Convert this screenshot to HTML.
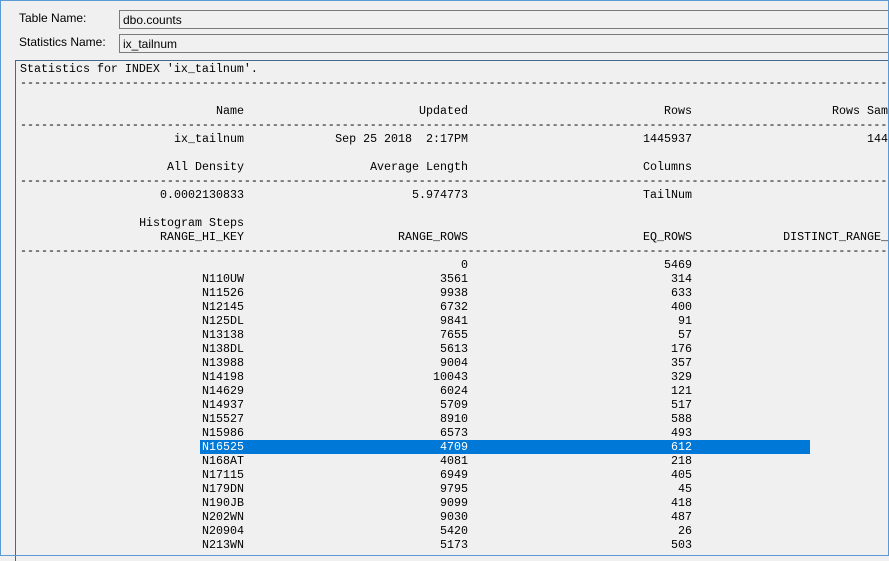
<!DOCTYPE html>
<html><head><meta charset="utf-8"><style>
html,body{margin:0;padding:0}
body{width:889px;height:556px;background:#f0f0f0;position:relative;overflow:hidden;font-family:"Liberation Sans",sans-serif}
.frame{position:absolute;left:0;top:0;width:887px;height:554px;border:1px solid #5b9bd5}
.lbl{position:absolute;left:19px;font-size:12px;color:#000}
.inp{position:absolute;left:119px;width:780px;height:19px;border:1px solid #7a7a7a;background:#f0f0f0;font-size:12px;line-height:19px;padding-left:3px;box-sizing:border-box}
.ta{position:absolute;left:15px;top:60px;width:880px;height:500px;border-left:1px solid #44698f;border-top:1px solid #44698f;overflow:hidden}
.ln{position:absolute;left:0;height:14px;width:1000px;font-family:"Liberation Mono",monospace;font-size:11.67px;line-height:14px;white-space:pre;color:#000}
.c{position:absolute;top:0;text-align:right}
.c1{left:0;width:228px}
.c2{left:228px;width:224px}
.c3{left:452px;width:224px}
.c4{left:676px;width:224px}
.l{position:absolute;left:4px;top:0}
.hl{position:absolute;left:184px;width:610px;height:14px;background:#0078d7}
.w{color:#fff}
</style></head><body>
<div class="frame"></div>
<div class="lbl" style="top:11px">Table Name:</div>
<div class="lbl" style="top:35px">Statistics Name:</div>
<div class="inp" style="top:10px">dbo.counts</div>
<div class="inp" style="top:34px">ix_tailnum</div>
<div class="ta">
<div class="hl" style="top:379px"></div>
<div class="ln" style="top:1px"><span class="l">Statistics for INDEX 'ix_tailnum'.</span></div>
<div class="ln" style="top:15px"><span class="l">------------------------------------------------------------------------------------------------------------------------------------------------</span></div>
<div class="ln" style="top:43px"><span class="c c1">Name</span><span class="c c2">Updated</span><span class="c c3">Rows</span><span class="c c4">Rows Sampled</span></div>
<div class="ln" style="top:57px"><span class="l">------------------------------------------------------------------------------------------------------------------------------------------------</span></div>
<div class="ln" style="top:71px"><span class="c c1">ix_tailnum</span><span class="c c2">Sep 25 2018  2:17PM</span><span class="c c3">1445937</span><span class="c c4">1445937</span></div>
<div class="ln" style="top:99px"><span class="c c1">All Density</span><span class="c c2">Average Length</span><span class="c c3">Columns</span></div>
<div class="ln" style="top:113px"><span class="l">------------------------------------------------------------------------------------------------------------------------------------------------</span></div>
<div class="ln" style="top:127px"><span class="c c1">0.0002130833</span><span class="c c2">5.974773</span><span class="c c3">TailNum</span></div>
<div class="ln" style="top:155px"><span class="c c1">Histogram Steps</span></div>
<div class="ln" style="top:169px"><span class="c c1">RANGE_HI_KEY</span><span class="c c2">RANGE_ROWS</span><span class="c c3">EQ_ROWS</span><span class="c c4">DISTINCT_RANGE_ROWS</span></div>
<div class="ln" style="top:183px"><span class="l">------------------------------------------------------------------------------------------------------------------------------------------------</span></div>
<div class="ln" style="top:197px"><span class="c c1"></span><span class="c c2">0</span><span class="c c3">5469</span></div>
<div class="ln" style="top:211px"><span class="c c1">N110UW</span><span class="c c2">3561</span><span class="c c3">314</span></div>
<div class="ln" style="top:225px"><span class="c c1">N11526</span><span class="c c2">9938</span><span class="c c3">633</span></div>
<div class="ln" style="top:239px"><span class="c c1">N12145</span><span class="c c2">6732</span><span class="c c3">400</span></div>
<div class="ln" style="top:253px"><span class="c c1">N125DL</span><span class="c c2">9841</span><span class="c c3">91</span></div>
<div class="ln" style="top:267px"><span class="c c1">N13138</span><span class="c c2">7655</span><span class="c c3">57</span></div>
<div class="ln" style="top:281px"><span class="c c1">N138DL</span><span class="c c2">5613</span><span class="c c3">176</span></div>
<div class="ln" style="top:295px"><span class="c c1">N13988</span><span class="c c2">9004</span><span class="c c3">357</span></div>
<div class="ln" style="top:309px"><span class="c c1">N14198</span><span class="c c2">10043</span><span class="c c3">329</span></div>
<div class="ln" style="top:323px"><span class="c c1">N14629</span><span class="c c2">6024</span><span class="c c3">121</span></div>
<div class="ln" style="top:337px"><span class="c c1">N14937</span><span class="c c2">5709</span><span class="c c3">517</span></div>
<div class="ln" style="top:351px"><span class="c c1">N15527</span><span class="c c2">8910</span><span class="c c3">588</span></div>
<div class="ln" style="top:365px"><span class="c c1">N15986</span><span class="c c2">6573</span><span class="c c3">493</span></div>
<div class="ln w" style="top:379px"><span class="c c1">N16525</span><span class="c c2">4709</span><span class="c c3">612</span></div>
<div class="ln" style="top:393px"><span class="c c1">N168AT</span><span class="c c2">4081</span><span class="c c3">218</span></div>
<div class="ln" style="top:407px"><span class="c c1">N17115</span><span class="c c2">6949</span><span class="c c3">405</span></div>
<div class="ln" style="top:421px"><span class="c c1">N179DN</span><span class="c c2">9795</span><span class="c c3">45</span></div>
<div class="ln" style="top:435px"><span class="c c1">N190JB</span><span class="c c2">9099</span><span class="c c3">418</span></div>
<div class="ln" style="top:449px"><span class="c c1">N202WN</span><span class="c c2">9030</span><span class="c c3">487</span></div>
<div class="ln" style="top:463px"><span class="c c1">N20904</span><span class="c c2">5420</span><span class="c c3">26</span></div>
<div class="ln" style="top:477px"><span class="c c1">N213WN</span><span class="c c2">5173</span><span class="c c3">503</span></div>
</div>
<div style="position:absolute;left:888px;top:0;width:1px;height:556px;background:#5b9bd5"></div>
<div style="position:absolute;left:0;top:555px;width:889px;height:1px;background:#5b9bd5"></div>
</body></html>
